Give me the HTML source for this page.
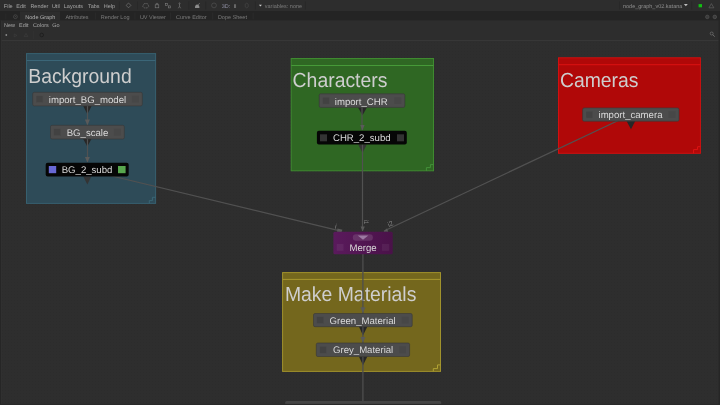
<!DOCTYPE html>
<html><head><meta charset="utf-8">
<style>
html,body{margin:0;padding:0;width:720px;height:405px;overflow:hidden;background:#2e2e2e;}
svg{display:block;will-change:transform;text-rendering:geometricPrecision;font-family:"Liberation Sans",sans-serif;}
.mt{font-size:5.5px;fill:#a6a6a6;}
.tt{font-size:5.5px;fill:#7c7c7c;}
.gt{font-size:19.4px;fill:#cecece;}
.nt{font-size:9.6px;fill:#dadada;}
</style></head><body>
<svg width="720" height="405" viewBox="0 0 720 405">
<!-- graph background -->
<rect x="0" y="0" width="720" height="405" fill="#2e2e2e"/>
<!-- menubar -->
<rect x="0" y="0" width="720" height="11" fill="#2d2d2d"/>
<g class="mt">
<text x="3.8" y="7.8">File</text>
<text x="16.3" y="7.8">Edit</text>
<text x="30.4" y="7.8">Render</text>
<text x="51.9" y="7.8">Util</text>
<text x="63.8" y="7.8">Layouts</text>
<text x="88" y="7.8">Tabs</text>
<text x="103.8" y="7.8">Help</text>
</g>
<g stroke="#252525" stroke-width="0.6">
<line x1="119.4" y1="1.5" x2="119.4" y2="9.5"/>
<line x1="137.5" y1="1.5" x2="137.5" y2="9.5"/>
<line x1="188.8" y1="1.5" x2="188.8" y2="9.5"/>
<line x1="205.7" y1="1.5" x2="205.7" y2="9.5"/>
<line x1="255.4" y1="1.5" x2="255.4" y2="9.5"/>
<line x1="305.4" y1="1.5" x2="305.4" y2="9.5"/>
<line x1="619.5" y1="1.5" x2="619.5" y2="9.5"/>
<line x1="691.7" y1="1.5" x2="691.7" y2="9.5"/>
</g>
<g class="tt">
<text x="264.8" y="7.8">variables: none</text>
<text x="623" y="7.8" fill="#8e8e8e">node_graph_v02.katana</text>
</g>
<!-- tabbar -->
<rect x="0" y="11" width="720" height="9.6" fill="#242424"/>
<rect x="20" y="11.4" width="40" height="9.4" fill="#2d2d2d"/>
<g class="tt">
<text x="25.3" y="18.8" fill="#b2b2b2">Node Graph</text>
<text x="65.4" y="18.8">Attributes</text>
<text x="100.8" y="18.8">Render Log</text>
<text x="139.9" y="18.8">UV Viewer</text>
<text x="176" y="18.8">Curve Editor</text>
<text x="217.9" y="18.8">Dope Sheet</text>
</g>
<g stroke="#2e2e2e" stroke-width="0.7">
<line x1="95.3" y1="12.5" x2="95.3" y2="19.5"/>
<line x1="134.9" y1="12.5" x2="134.9" y2="19.5"/>
<line x1="170.6" y1="12.5" x2="170.6" y2="19.5"/>
<line x1="212.7" y1="12.5" x2="212.7" y2="19.5"/>
<line x1="253.1" y1="12.5" x2="253.1" y2="19.5"/>
</g>
<!-- panel header -->
<rect x="0.5" y="20.6" width="718" height="19.8" fill="#2d2d2d"/>
<g class="mt">
<text x="4" y="26.9">New</text>
<text x="19" y="26.9">Edit</text>
<text x="32.9" y="26.9">Colors</text>
<text x="52.3" y="26.9">Go</text>
</g>
<rect x="0" y="40.2" width="720" height="0.8" fill="#3a3a3a"/>


<!-- chrome icons -->
<g fill="none" stroke="#7e7e7e" stroke-width="0.6">
 <path d="M128.5 3 L130.9 5.4 L128.5 7.8 L126.1 5.4 Z"/>
 <path d="M144.2 3.6 L147.4 3.6 L148.9 6.3 L147.4 7.9 L144.2 7.9 L142.7 6.3 Z" stroke-dasharray="1.5 0.6"/>
 <rect x="155.2" y="4.8" width="3.6" height="3"/>
 <path d="M156.2 4.6 V3.4 H157.8 V4.6"/>
 <rect x="165.6" y="3.3" width="2" height="2"/><rect x="168.4" y="5.9" width="2" height="2"/>
 <circle cx="179.5" cy="3.4" r="0.6"/>
 <path d="M179.5 4 V6.3 M178.3 8.3 L179.5 6.3 L180.7 8.3"/>
 <circle cx="214" cy="5.4" r="2.4" stroke="#555"/>
 <path d="M245.2 4.2 L246.7 3.2 L248.2 4.2 V6.8 L246.7 7.8 L245.2 6.8Z" stroke="#4a4a4a"/>
 <path d="M708.9 7.8 L711.4 3.6 L713.9 7.8 Z" stroke="#666"/>
 <circle cx="15.4" cy="16.7" r="1.9" stroke="#545454"/><path d="M14.6 16.2 H16.2 L15.4 17.3 Z" fill="#545454" stroke="none"/>
 <circle cx="707.3" cy="16.9" r="1.8" stroke="#545454" fill="#3c3c3c"/>
 <circle cx="714.8" cy="16.9" r="1.8" stroke="#5a5a5a" fill="#3c3c3c"/>
 <path d="M14.2 34 L17 35.4 L14.2 36.8 Z" stroke="#3e3e3e"/>
 <path d="M24.2 36.6 L26 33.4 L27.8 36.6 Z" stroke="#3e3e3e"/>
 <circle cx="41.7" cy="35" r="1.8" stroke="#1e1e1e" stroke-width="0.9"/>
 <circle cx="711.7" cy="33.5" r="1.5" stroke="#7a7a7a"/>
 <path d="M712.8 34.7 L714.7 36.7" stroke="#7a7a7a" stroke-width="0.8"/>
</g>
<g fill="#9a9a9a">
 <path d="M195 8 C194.8 5.8 195.8 4.4 197.2 4.4 C198.6 4.4 199.6 5.8 199.4 8 Z" fill="#8c8c8c"/><path d="M198.4 4.8 L199.6 3.2" stroke="#8c8c8c" stroke-width="0.7"/>
 <path d="M683.9 4 L687.8 4 L685.85 6.3 Z" fill="#bdbdbd"/>
 <path d="M258.9 4.8 L261.9 4.8 L260.4 6.4 Z" fill="#d0d0d0"/>
 <rect x="698.6" y="4.1" width="3.4" height="3.2" fill="#12c012"/>
 <circle cx="6.3" cy="35" r="0.9" fill="#8a8a8a"/>
</g>
<text x="221.8" y="7.8" font-size="5.5" fill="#9090a4">3D:</text>
<text x="233.4" y="7.8" font-size="5.5" fill="#9a9a9a">II</text>
<g stroke="#363636" stroke-width="0.7">
 <line x1="5.8" y1="13.5" x2="5.8" y2="19.5" stroke="#2c2c2c"/>
 <line x1="33.7" y1="31" x2="33.7" y2="39" stroke="#343434"/>
  </g>
<rect x="0" y="20.5" width="1" height="384.5" fill="#262626"/>
<rect x="1" y="20.5" width="0.8" height="384.5" fill="#313131"/>
<rect x="718.5" y="20.5" width="1.5" height="384.5" fill="#262626"/>
<defs><pattern id="grid" patternUnits="userSpaceOnUse" x="2" y="0" width="3" height="3"><rect x="0" y="0" width="1" height="1" fill="#000" fill-opacity="0.035"/></pattern></defs>
<rect x="1.8" y="41" width="716.7" height="362.9" fill="url(#grid)"/>
<!-- groups -->
<g id="groups">
 <rect x="26.5" y="53.6" width="129.1" height="149.8" fill="#2e4b58" stroke="#37606f" stroke-width="1"/>
 <line x1="26.5" y1="60.5" x2="155.6" y2="60.5" stroke="#3b6678" stroke-width="1"/>
 <text class="gt" transform="translate(28.2,82.7) scale(1,1.05)">Background</text>
 <rect x="291.2" y="58.5" width="142.3" height="112.3" fill="#2f6723" stroke="#3f8a30" stroke-width="1"/>
 <line x1="291.2" y1="65.5" x2="433.5" y2="65.5" stroke="#469a38" stroke-width="1"/>
 <text class="gt" transform="translate(292.6,87.1) scale(1,1.05)">Characters</text>
 <rect x="558.5" y="57.8" width="141.9" height="95.5" fill="#b00808" stroke="#d20f0f" stroke-width="1"/>
 <line x1="558.5" y1="64.7" x2="700.4" y2="64.7" stroke="#dc1212" stroke-width="1"/>
 <text class="gt" transform="translate(559.9,87.1) scale(1,1.05)">Cameras</text>
 <rect x="282.6" y="272.6" width="157.9" height="98.8" fill="#74671d" stroke="#a0922c" stroke-width="1"/>
 <line x1="282.6" y1="279.4" x2="440.5" y2="279.4" stroke="#a8982e" stroke-width="1"/>
 <text class="gt" transform="translate(284.9,301.3) scale(1,1.05)">Make Materials</text>
</g>


<!-- output ports -->
<g fill="#272727">
 <path d="M83.1 105.8 L91.7 105.8 L87.4 114.2 Z"/>
 <path d="M83.2 138.9 L91.4 138.9 L87.3 146.4 Z"/>
 <path d="M83.3 176.4 L91.3 176.4 L87.3 184.6 Z" fill="#343434"/>
 <path d="M357.9 107.3 L367.1 107.3 L362.5 115.2 Z"/>
 <path d="M358.2 144.5 L366.8 144.5 L362.5 152.8 Z" fill="#353535"/>
 <path d="M626.4 120.8 L635.4 120.8 L631 129.2 Z"/>
 <path d="M359.5 254 L366.9 254 L363.2 260.7 Z" fill="#2c2c2c"/>
 <path d="M358.9 326.5 L367.4 326.5 L363 335.5 Z"/>
 <path d="M358.9 356.4 L367.4 356.4 L363 365.2 Z"/>
</g>
<!-- links -->
<g stroke="#515151" stroke-width="1.2" fill="none">
 <line x1="87" y1="170" x2="341" y2="231.1"/>
 <line x1="631" y1="114.5" x2="384" y2="231"/>
 <line x1="362.5" y1="137" x2="362.5" y2="231"/>
 <line x1="362.9" y1="243" x2="362.9" y2="405" stroke="#4e4e4e" stroke-width="1.3"/>
 <line x1="87.5" y1="99" x2="87.5" y2="125"/>
 <line x1="87.5" y1="132" x2="87.5" y2="162"/>
 <line x1="362" y1="100" x2="362" y2="130"/>
</g>


<!-- arrowheads -->
<g fill="#5a5a5a">
 <path d="M84.9 119.6 L89.9 119.6 L87.4 125.4 Z"/>
 <path d="M84.9 157 L89.9 157 L87.4 162.6 Z"/>
 <path d="M360.2 125 L364.6 125 L362.4 130.6 Z"/>
 <path d="M360.6 226.4 L364.8 226.4 L362.7 231.6 Z"/>
 <path d="M337.5 228.6 L342.5 229.8 L341.5 232 L337 231.8 Z"/>
 <path d="M383.5 231.8 L388.2 231.8 L387 228.2 Z"/>
 <path d="M360.3 307.2 L365.5 307.2 L362.9 312.8 Z"/>
 <path d="M360.4 336.9 L365.4 336.9 L362.9 342.4 Z"/>
</g>
<!-- nodes -->

<!-- resize handles -->
<g fill="none" stroke-width="1">
 <path d="M149.3 203.4 V200.6 H152.4 V197.3 H155.6" stroke="#3a6676"/>
 <path d="M426.4 170.8 V167.6 H430.4 V164.6 H433.5" stroke="#44903a"/>
 <path d="M693.6 153.3 V149.6 H697.6 V146.7 H700.4" stroke="#de1414"/>
 <path d="M433.3 371.35 V368.6 H437.5 V364.9 H440.5" stroke="#b0a234"/>
</g>
<!-- merge input labels -->
<g font-size="6" fill="#808080">
 <text transform="translate(334.5,228.4) rotate(13.5)" font-size="7">i</text>
 <text transform="translate(364,219.4) rotate(90)" font-size="6.5">i1</text>
 <text transform="translate(388.9,227.2) rotate(-25)" font-size="7">i2</text>
 <text transform="translate(356.6,300.4) rotate(90)" font-size="4.6" fill="#a09a78">i</text>
</g>

<g id="nodes">
 <rect x="32.7" y="92.3" width="109.6" height="13.6" rx="1.5" fill="#4c4c4c" stroke="#383838" stroke-width="0.6"/>
 
 <text class="nt" x="48.8" y="103">import_BG_model</text>

 <rect x="50.5" y="125.3" width="73.8" height="13.7" rx="1.5" fill="#4c4c4c" stroke="#383838" stroke-width="0.6"/>
 <text class="nt" x="66.7" y="136">BG_scale</text>

 <rect x="45.7" y="162.7" width="83" height="13.8" rx="2" fill="#060606"/>
 <rect x="48.8" y="166" width="7.4" height="7.2" fill="#6868d4"/>
 <rect x="118" y="166" width="7.6" height="7.2" fill="#58a64e"/>
 <text class="nt" x="61.7" y="173" fill="#ececec">BG_2_subd</text>

 <rect x="319.2" y="93.8" width="85.6" height="13.6" rx="1.5" fill="#4c4c4c" stroke="#383838" stroke-width="0.6"/>
 
 <text class="nt" x="334.8" y="104.5">import_CHR</text>

 <rect x="316.9" y="130.8" width="89.9" height="13.8" rx="2" fill="#060606"/>
 <rect x="320" y="134.3" width="7" height="7" fill="#333"/>
 <rect x="397" y="134.3" width="7" height="7" fill="#333"/>
 <text class="nt" x="333" y="141.3" fill="#ececec">CHR_2_subd</text>

 <rect x="582.6" y="107.9" width="96.4" height="13.3" rx="1.5" fill="#4c4c4c" stroke="#383838" stroke-width="0.6"/>
 <text class="nt" x="598.5" y="118.2">import_camera</text>

 <defs><linearGradient id="mg" x1="0" x2="1" y1="0" y2="0"><stop offset="0" stop-color="#5a1a5c"/><stop offset="1" stop-color="#4a1249"/></linearGradient></defs>
 <rect x="333.4" y="231.8" width="59.3" height="22.4" rx="1.5" fill="url(#mg)"/>
 <rect x="352.8" y="234.2" width="20.1" height="6.5" rx="3.25" fill="#ffffff" fill-opacity="0.12"/>
 <path d="M357.7 235.6 L368.3 235.6 L363 239.7 Z" fill="#9c7aa2"/>
 <rect x="336.7" y="244" width="6.8" height="6.8" fill="#ffffff" fill-opacity="0.06"/>
 <rect x="382" y="244" width="7.2" height="6.8" fill="#ffffff" fill-opacity="0.06"/>
 <text class="nt" x="349.4" y="251" fill="#e2d4e2">Merge</text>

 <rect x="313.5" y="313.5" width="98.7" height="13.2" rx="1.5" fill="#4c4c4c" stroke="#383838" stroke-width="0.6"/>
 <text class="nt" x="329.5" y="323.8">Green_Material</text>

 <rect x="316.3" y="343" width="93.3" height="13.5" rx="1.5" fill="#4c4c4c" stroke="#383838" stroke-width="0.6"/>
 <text class="nt" x="333" y="353.3">Grey_Material</text>

 <rect x="285.2" y="401" width="156" height="8" rx="1.5" fill="#454545"/>

<g id="gsq">
 <rect x="36.1" y="95.7" width="6.8" height="6.8" fill="#424242" stroke="#4e4e4e" stroke-width="0.4"/>
 <rect x="131.9" y="95.7" width="6.8" height="6.8" fill="#474747"/>
 <rect x="53.9" y="128.8" width="6.8" height="6.8" fill="#424242" stroke="#4e4e4e" stroke-width="0.4"/>
 <rect x="113.9" y="128.8" width="6.8" height="6.8" fill="#474747"/>
 <rect x="322.6" y="97.2" width="6.8" height="6.8" fill="#424242" stroke="#4e4e4e" stroke-width="0.4"/>
 <rect x="394.4" y="97.2" width="6.8" height="6.8" fill="#474747"/>
 <rect x="586.0" y="111.2" width="6.8" height="6.8" fill="#424242" stroke="#4e4e4e" stroke-width="0.4"/>
 <rect x="668.6" y="111.2" width="6.8" height="6.8" fill="#474747"/>
 <rect x="316.9" y="316.7" width="6.8" height="6.8" fill="#424242" stroke="#4e4e4e" stroke-width="0.4"/>
 <rect x="401.8" y="316.7" width="6.8" height="6.8" fill="#474747"/>
 <rect x="319.7" y="346.4" width="6.8" height="6.8" fill="#424242" stroke="#4e4e4e" stroke-width="0.4"/>
 <rect x="399.2" y="346.4" width="6.8" height="6.8" fill="#474747"/>
</g>
</g>
<rect x="0" y="403.9" width="720" height="1.1" fill="#292929"/>
</svg>
</body></html>
